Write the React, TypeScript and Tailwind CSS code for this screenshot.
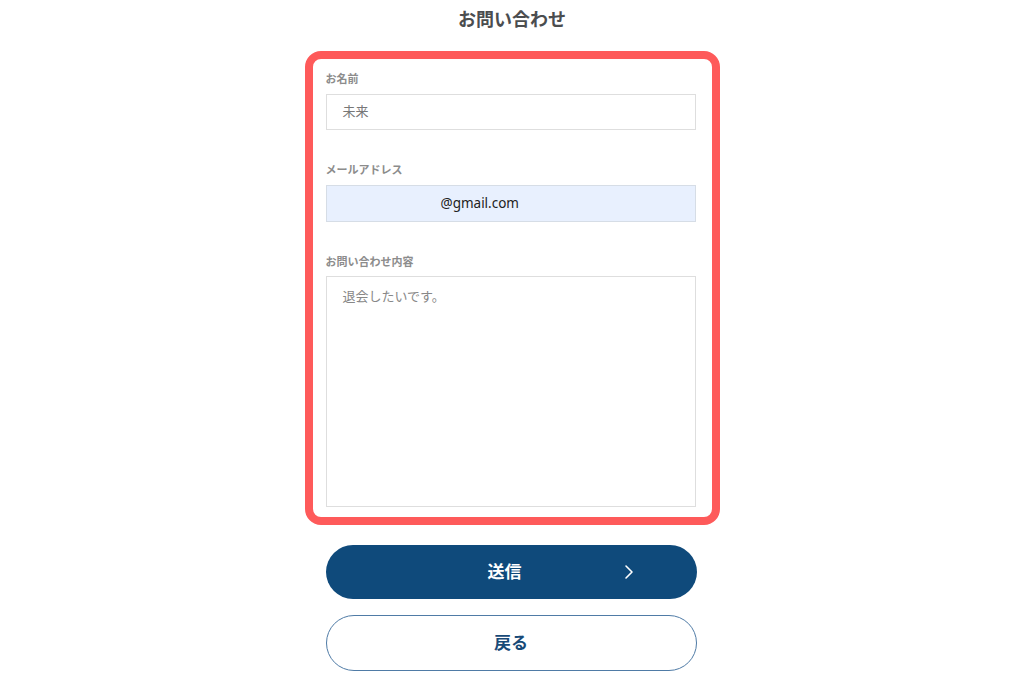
import React from "react";

export default function App() {
  const font = { fontFamily: '"Noto Sans", "Noto Sans CJK JP", sans-serif' };
  return (
    <div className="min-h-[683px] w-full bg-white" style={font}>
      <div className="mx-auto w-[415px] pl-0">
        <h1 className="h-[38px] pt-[6px] text-center text-[18px] font-bold leading-[26px] text-[#4b4d4f]">
          お問い合わせ
        </h1>
        <div className="mt-[13px] rounded-[16px] border-[8px] border-[#fe5a5a] pl-[13px] pr-[16px] pt-[12px] pb-[10px]">
          <label className="block text-[11px] font-bold leading-[16px] text-[#8c8c8c]">お名前</label>
          <div className="mt-[7px] flex h-[36px] items-center border border-[#dedede] pl-[16px] text-[13px] text-[#777]">
            未来
          </div>
          <label className="mt-[32px] block text-[11px] font-bold leading-[16px] text-[#8c8c8c]">メールアドレス</label>
          <div className="mt-[7px] flex h-[37px] items-center border border-[#d6dde6] bg-[#e8f0fe] pl-[114px] text-[13.5px] text-[#222]">
            @gmail.com
          </div>
          <label className="mt-[32px] block text-[11px] font-bold leading-[16px] text-[#8c8c8c]">お問い合わせ内容</label>
          <div className="mt-[6px] h-[231px] border border-[#dedede] pl-[16px] pt-[9px] text-[13px] leading-[20px] text-[#888]">
            退会したいです。
          </div>
        </div>
        <div className="ml-[21px] w-[371px]">
          <button className="relative mt-[20px] flex h-[54px] w-full items-center justify-center rounded-full bg-[#0f4a7b] pr-[13px] text-[17px] font-bold text-white">
            送信
            <svg
              className="absolute right-[63px] top-1/2 -translate-y-1/2"
              width="10"
              height="16"
              viewBox="0 0 10 16"
              fill="none"
            >
              <path d="M2 2 L8 8 L2 14" stroke="white" strokeWidth="1.6" strokeLinecap="round" strokeLinejoin="round" />
            </svg>
          </button>
          <button className="mt-[16px] flex h-[56px] w-full items-center justify-center rounded-full border border-[#4f7ba6] bg-white text-[17px] font-bold text-[#184a78]">
            戻る
          </button>
        </div>
      </div>
    </div>
  );
}
